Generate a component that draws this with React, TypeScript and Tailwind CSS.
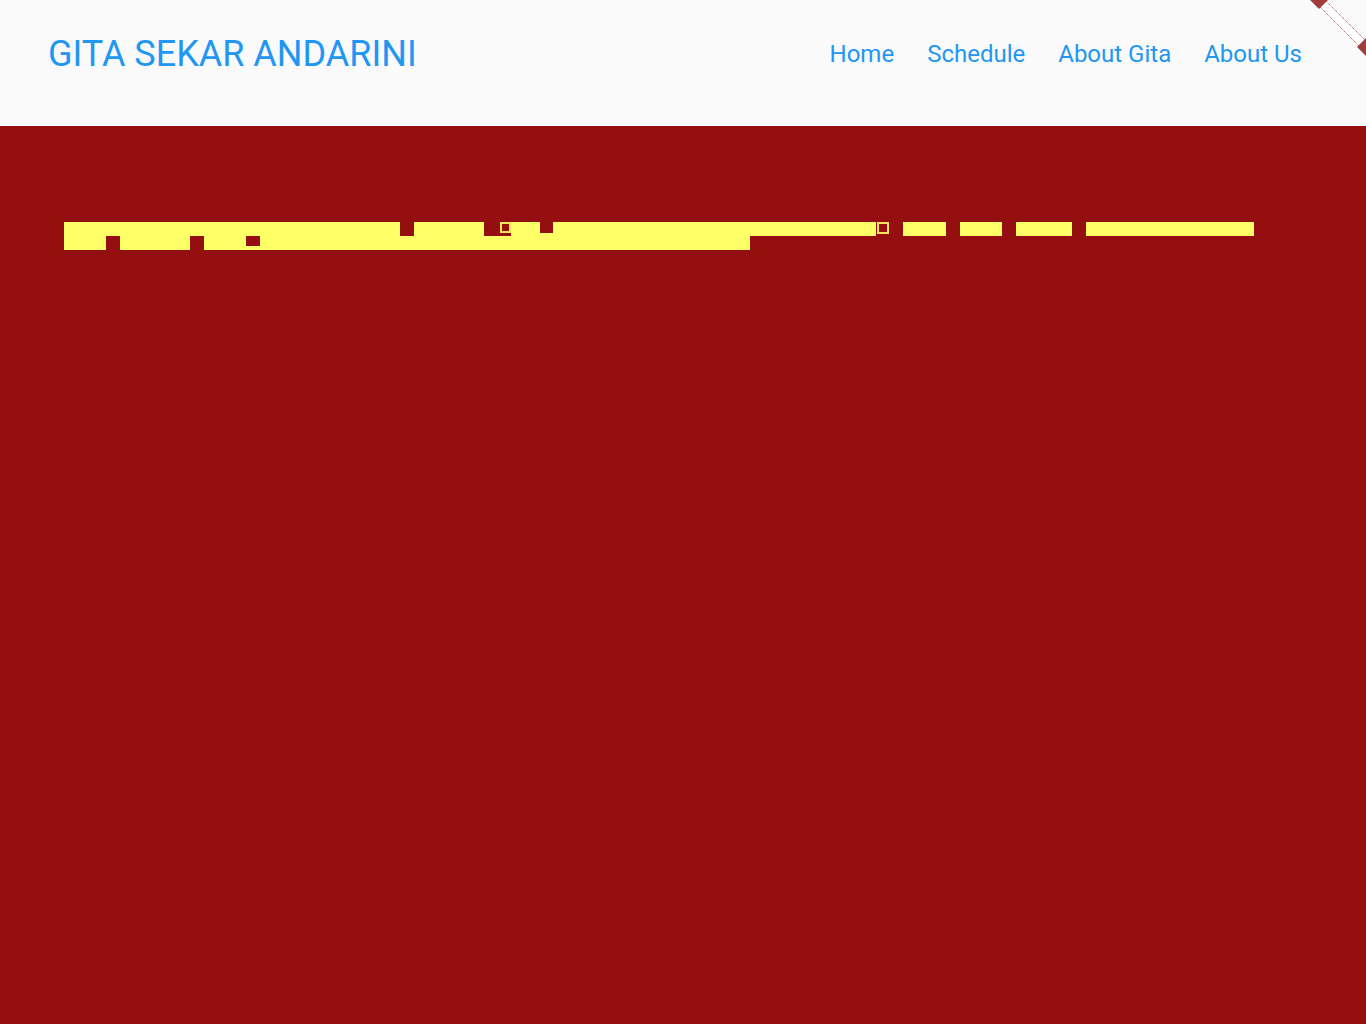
import React from 'react';

const navItems = ['Home', 'Schedule', 'About Gita', 'About Us'];

// corner ribbon, mostly cut off by the window edge
const CornerRibbon: React.FC = () => (
  <svg className="absolute top-0 right-0" width="60" height="60" viewBox="0 0 60 60">
    <polygon points="4,0 22,0 60,38 60,56" fill="#ffffff" />
    <polygon points="4,0 22,0 13,9" fill="#a23b3b" />
    <polygon points="60,38 51,47 60,56" fill="#a23b3b" />
    <line x1="19" y1="0" x2="60" y2="41" stroke="#a23b3b" strokeWidth="1" strokeDasharray="1 1" />
    <line x1="7" y1="0" x2="60" y2="53" stroke="#a23b3b" strokeWidth="1" strokeDasharray="1 1" />
  </svg>
);

export default function App() {
  return (
    <div className="min-h-screen bg-[#950f11] font-['Roboto',sans-serif]">
      {/* Header */}
      <header className="relative flex h-[126px] items-start justify-between bg-[#fafafa] pl-[48px] pr-[64px] pt-[32px]">
        <h1 className="text-[36px] leading-[44px] font-normal text-[#2196f3]">GITA SEKAR ANDARINI</h1>
        <nav className="flex gap-[33px] pt-[4px]">
          {navItems.map((item) => (
            <a key={item} href="#" className="text-[24px] leading-[36px] text-[#2196f3]">
              {item}
            </a>
          ))}
        </nav>
        <CornerRibbon />
      </header>

      {/* Highlighted banner rows */}
      <main className="pl-[64px] pt-[96px]">
        <div className="flex h-[14px]">
          <div className="w-[336px] bg-[#ffff66]" />
          <div className="w-[14px]" />
          <div className="w-[70px] bg-[#ffff66]" />
          <div className="w-[16px]" />
          <div className="h-[11px] w-[11px] border-2 border-[#f4e45a]" />
          <div className="w-[29px] bg-[#ffff66]" />
          <div className="flex w-[13px] flex-col bg-[#ffff66]">
            <div className="h-[11px] bg-[#950f11]" />
          </div>
          <div className="w-[323px] bg-[#ffff66]" />
          <div className="w-[1px]" />
          <div className="h-[12px] w-[12px] border-2 border-[#f4e45a]" />
          <div className="w-[14px]" />
          <div className="w-[43px] bg-[#ffff66]" />
          <div className="w-[14px]" />
          <div className="w-[42px] bg-[#ffff66]" />
          <div className="w-[14px]" />
          <div className="w-[56px] bg-[#ffff66]" />
          <div className="w-[14px]" />
          <div className="w-[168px] bg-[#ffff66]" />
        </div>
        <div className="flex h-[14px]">
          <div className="w-[42px] bg-[#ffff66]" />
          <div className="w-[14px]" />
          <div className="w-[70px] bg-[#ffff66]" />
          <div className="w-[14px]" />
          <div className="w-[42px] bg-[#ffff66]" />
          <div className="flex w-[14px] flex-col bg-[#ffff66]">
            <div className="h-[10px] bg-[#950f11]" />
          </div>
          <div className="w-[490px] bg-[#ffff66]" />
        </div>
      </main>
    </div>
  );
}
